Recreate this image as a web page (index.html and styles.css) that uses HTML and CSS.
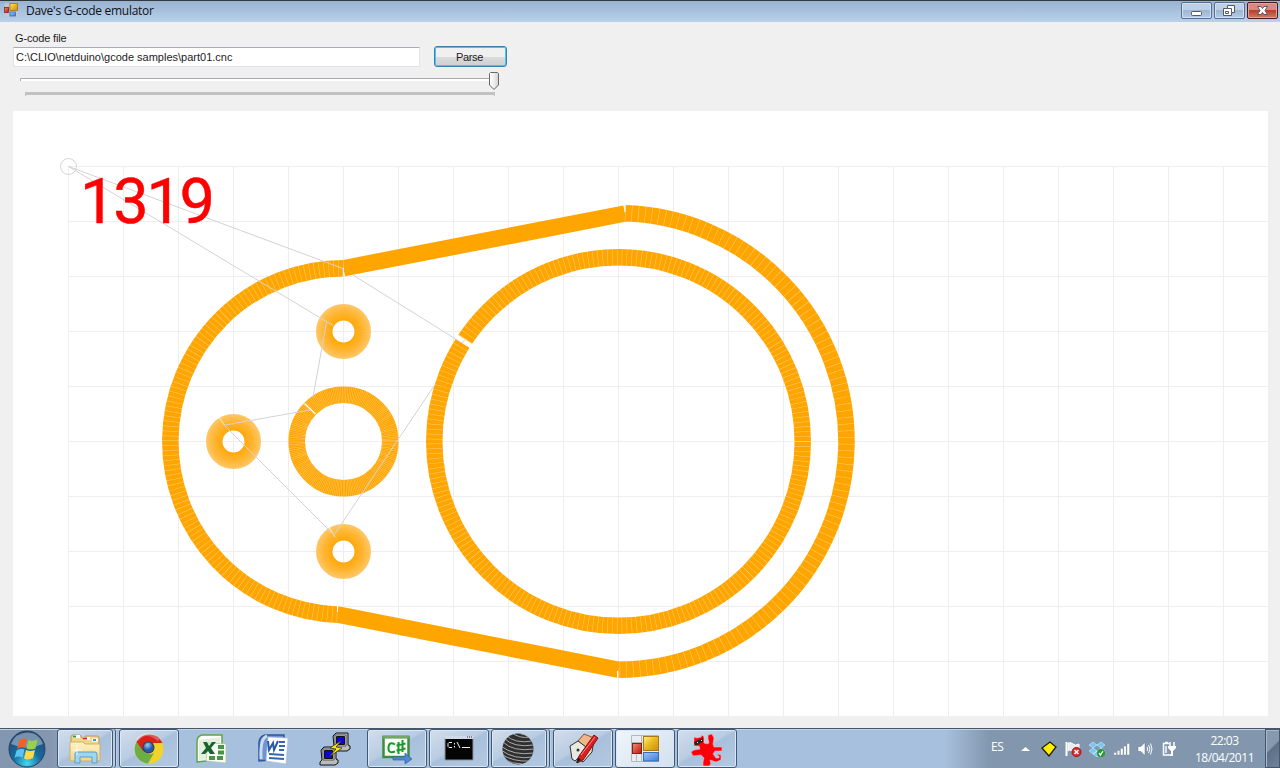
FILE: index.html
```html
<!DOCTYPE html>
<html lang="en">
<head>
<meta charset="utf-8">
<title>Dave's G-code emulator</title>
<link rel="stylesheet" href="styles.css">
</head>
<body>
<div class="desktop">
  <header class="titlebar">
    <svg class="app-icon" width="14" height="14" viewBox="0 0 28 28">
      <rect x="1" y="1" width="26" height="26" fill="#c3c8d0"/><path d="M1 8H12M11 1V27M1 20H11" stroke="#a9afba"/>
      <rect x="12" y="1" width="15" height="14" fill="url(#gy)" stroke="#9a6a10" stroke-width="1.5"/>
      <rect x="1" y="9" width="8" height="10" fill="url(#gr)" stroke="#8a1a10" stroke-width="1.5"/>
      <rect x="12" y="18" width="11" height="8" fill="url(#gb)" stroke="#3b66b8" stroke-width="1.5"/>
    </svg>
    <span class="title">Dave's G-code emulator</span>
    <div class="window-buttons">
      <span class="wb"><svg width="29" height="15"><rect x="9.500" y="8.500" width="10" height="4" rx="1" fill="#fff" stroke="#535b69"/></svg></span>
      <span class="wb"><svg width="29" height="15"><path d="M12.500 2.500h7v7h-3v3h-8v-7h4z" fill="#fff" stroke="#535b69"/><path d="M12.500 5.500h4v4M10.500 8.500h3v2h-3z" fill="none" stroke="#535b69"/></svg></span>
      <span class="wb wb-close"><svg width="29" height="15"><path d="M9.500 3.500h3.500l1.500 2L16 3.500h3.500L17 7.500l2.500 4H16l-1.500-2-1.500 2H9.500l2.500-4z" fill="#fff" stroke="#5c5560"/></svg></span>
    </div>
  </header>

  <main class="form">
    <label class="label">G-code file</label>
    <div class="row">
      <div class="input">C:\CLIO\netduino\gcode samples\part01.cnc</div>
      <div class="button">Parse</div>
    </div>
    <svg class="slider" width="490" height="30" viewBox="14 69 490 30">
      <rect x="20" y="78" width="470" height="3" fill="#fff"/><path d="M20.500 81V78.500H490" fill="none" stroke="#aaa"/>
      <rect x="25" y="92" width="470" height="3" fill="#c2c2c2"/><path d="M25.500 92V96M494.500 92V96" stroke="#c2c2c2"/>
      <path d="M490.500 72.500h7l1 1V85l-4.500 4.500L489.500 85V73.500z" fill="url(#thumb)" stroke="#686868" stroke-linejoin="round"/>
    </svg>
    <svg class="plot" width="1255" height="605" viewBox="13 111 1255 605">
      <defs>
        <pattern id="grid" x="68" y="166" width="55" height="55" patternUnits="userSpaceOnUse"><path d="M0 .5H55M.5 0V55" stroke="#eee" fill="none"/></pattern>
        <radialGradient id="hole" gradientUnits="userSpaceOnUse" cx="0" cy="0" r="27.500"><stop offset=".4" stop-color="#ffa500"/><stop offset=".7" stop-color="#ffb228"/><stop offset="1" stop-color="#ffc562"/></radialGradient>
        <g id="drill"><circle r="19.250" stroke="url(#hole)"/><circle r="19.250" stroke="#fff" stroke-opacity=".13" stroke-dasharray=".4 .8"/></g>
      </defs>
      <rect x="68" y="166" width="1200" height="550" fill="url(#grid)"/>
      <g class="cuts">
        <path d="M343.500 268.250A173.250 173.250 0 0 0 338 614.660"/>
        <path d="M343.500 268.250L625 213.500M337 614.300L618.500 669.750"/>
        <path d="M625 213.350A228.250 228.250 0 0 1 618.500 669.750"/>
        <circle cx="618.500" cy="441.500" r="184.250"/>
        <circle cx="343.500" cy="441.500" r="46.750"/>
        <use href="#drill" x="343.500" y="331.500"/>
        <use href="#drill" x="233.500" y="441.500"/>
        <use href="#drill" x="343.500" y="551.500"/>
      </g>
      <g class="seams">
        <path d="M343.500 268.250A173.250 173.250 0 0 0 338 614.660" stroke-dasharray=".5 4.340"/>
        <path d="M625 213.350A228.250 228.250 0 0 1 618.500 669.750" stroke-dasharray=".5 6.180"/>
        <circle cx="618.500" cy="441.500" r="184.250" stroke-dasharray=".5 4.340"/>
        <circle cx="343.500" cy="441.500" r="46.750" stroke-dasharray=".4 1.232"/>
      </g>
      <g class="gaps">
        <path d="M455.500 336L473.500 347.500" stroke-width="5"/>
        <path d="M304.500 403.500L315.500 414" stroke-width="1.300"/>
        <path d="M343.500 268V276M625 205V212M617.500 671V678M337.500 606V612" stroke-width="1"/>
        <path d="M219.500 418L225 426M329.500 528L335 537" stroke-width="1" stroke-opacity=".7"/>
      </g>
      <g class="travel">
        <circle cx="68.500" cy="166.500" r="8"/>
        <path d="M343 276V268.500L68.500 166.500L333 325.500M326.500 322L313 397M310 410L225 425M224 425L334 535L434 386M353 275L462 343L465 340"/>
      </g>
      <text class="count" x="80" y="223" textLength="135">1319</text>
    </svg>
  </main>

  <footer class="taskbar">
    <div class="start">
      <svg width="38" height="38" viewBox="0 0 38 38"><circle cx="19" cy="19" r="18" fill="url(#orb)" stroke="#28435f"/><path d="M3 14Q7 3 19 2.500T35 14Q19 21 3 14Z" fill="#fff" opacity=".38"/>
      <path d="M11.500 10q4-3 7.500-1l-2 9q-4-2-8 1z" fill="#f0602b"/><path d="M20.500 10q4 2 9-.5l-2 9q-5 2-9 0z" fill="#9bd04a"/><path d="M8.500 20.500q4-3 8-1l-2 8q-4-2-8 .5z" fill="#5cc3f5"/><path d="M18 20q4 2 9 0l-2 8q-5 2.500-9 .5z" fill="#ffd947"/></svg>
    </div>
    <div class="task stacked"><svg width="34" height="32" viewBox="0 0 34 32"><path d="M3 8V4q0-2 2-2h7l2 3h3V3h12q2 0 2 2v22H3z" fill="#f0d58a" stroke="#b99a50"/><path d="M5 3.500h7M15 5.500h7M24 7h6" stroke="#fff" stroke-width="3"/><path d="M5 3.500h3" stroke="#2a9a3a" stroke-width="2"/><path d="M15 5.500h4" stroke="#d42d25" stroke-width="2"/><path d="M25 7h3" stroke="#4098da" stroke-width="2"/><path d="M2 9h13l2 2h15v17H2z" fill="url(#folder)" stroke="#d0b064"/><path d="M7 30V21q0-2 2-2h18q2 0 2 2v9h-5v-6H12v6z" fill="#9ed5f1" stroke="#5d9dc4"/><path d="M9 12v10M4 17h10" stroke="#fff" opacity=".8"/></svg></div>
    <div class="task"><svg width="32" height="32" viewBox="0 0 32 32"><circle cx="16" cy="16" r="14.500" fill="#f0d42a"/><path d="M3.500 9A14.500 14.500 0 0 1 29.500 10H16L10 19z" fill="#d8231b"/><path d="M3.500 9A14.500 14.500 0 0 0 15 30.500L21 20Q15 23 10 18z" fill="#6aae45"/><path d="M4 7Q13-4 26 7" stroke="#fff" opacity=".25" fill="none" stroke-width="3"/><circle cx="15.500" cy="14.500" r="6" fill="#333c50"/><circle cx="15.500" cy="14.500" r="5" fill="url(#blue)"/></svg></div>
    <div class="pin"><svg width="32" height="32" viewBox="0 0 32 32"><path d="M7 2h20v24L2 29V9Q2 3 7 2z" fill="#fff" stroke="#58a83c" stroke-width="1.500"/><path d="M4 7L25 4v21L4 27z" fill="#e4f0dd"/><path d="M13 10l18 1v19l-20-2z" fill="#f8fbf5" stroke="#a8c79c" stroke-width=".7"/><path d="M23 12h6v4h-6zM23 17.500h6v4h-6zM14 23h6v4h-6zM22 23h6v4h-6z" fill="#489445"/><path d="M8 9h4l2 4 3-4h4l-5 6 4 6h-5l-2-3-3 3H6l5-6z" fill="#17652d"/></svg></div>
    <div class="pin"><svg width="32" height="32" viewBox="0 0 32 32"><path d="M8 2h19v24L2 28V9Q3 3 8 2z" fill="#7194ce" stroke="#2c589e" stroke-width="1.500"/><path d="M10 3Q3 5 4 26" stroke="#cbdbf4" stroke-width="3" fill="none"/><path d="M11 4l20 1-2 26-20-3z" fill="#fff" stroke="#a8bddd" stroke-width=".7"/><path d="M22 9h6M22 13h6M22 17h5M12 21l15 1M12 25l15 1" stroke="#3368b0" stroke-width="2"/><path d="M11 8l1 9 4-7 1 7 4-9" fill="none" stroke="#285ba9" stroke-width="2"/></svg></div>
    <div class="pin"><svg width="34" height="34" viewBox="0 0 34 34"><g id="pc"><path d="M15 4l3-3h12v12l2 1v3l-3 2H14v-3l2-2z" fill="#bbb" stroke="#111"/><path d="M17 3h11v11H17z" fill="#ddd" stroke="#555"/><path d="M18.500 4.500h8v8h-8z" fill="#0a00e2" stroke="#111"/></g><use href="#pc" x="-12" y="14"/><path d="M24 8L12 16l6 1-7 8L24 16l-6-1z" fill="#ffeb00" stroke="#222" stroke-width=".7"/></svg></div>
    <div class="task"><svg width="32" height="32" viewBox="0 0 32 32"><path d="M2.500 4h25v20h-25z" fill="#f9fff7" stroke="#3e8d3e" stroke-width="2.500"/><path d="M2 4h26" stroke="#74a66b" stroke-width="3"/><path d="M14 11.500Q8 8 7.500 14.500T14 18.500M17.500 9v12M21.500 7v12M15.500 12.500l9-2M15.500 17.500l9-2" fill="none" stroke="#19992c" stroke-width="2"/><path d="M12 24h12v-4l7 6-7 5v-4H12z" fill="#4f87d0" stroke="#2b61af" stroke-width=".7"/></svg></div>
    <div class="task"><svg width="32" height="30" viewBox="0 0 32 30"><path d="M2 3h28v23H2z" fill="#050505" stroke="#8b919a"/><path d="M1.500 3.500h29" stroke="#d0dbea" stroke-width="3"/><path d="M24 3h1m1 0h1m1 0h1" stroke="#333"/><path d="M9 8.500H6l-1 1v3l1 1h3M11.500 9v1.500M11.500 12v1.500M14 8l3 6M19 13.500h8" fill="none" stroke="#eee"/></svg></div>
    <div class="task stacked"><svg class="ball" width="34" height="34" viewBox="0 0 34 34"><circle cx="17" cy="17" r="15.500" fill="#303030"/><g clip-path="url(#ball)" fill="none" stroke="#aaa"><path d="M5 3q8 9 27 6M3 6q9 10 30 7M2 10q10 10 31 7M0 14q12 10 33 7M0 18q13 10 32 7M0 22q12 8 29 7M2 27q9 5 19 5M10 0q8 7 19 5M15-1q6 5 13 4"/></g></svg></div>
    <div class="task"><svg width="32" height="32" viewBox="0 0 32 32"><path d="M11 8l6-6 10 4-2 13-9 10-5-3z" fill="#f3dcc1" stroke="#303030"/><path d="M11 8l6-7 10 4-7 10z" fill="#f2b587" stroke="#885b3d"/><path d="M3 13l8-5 8 6-2 6-9 8-3-2z" fill="#e9e9e2" stroke="#333"/><circle cx="11" cy="17" r="1.500" fill="#333"/><path d="M10 30l2-7L27 2l4 3-15 22z" fill="#e11d23" stroke="#761414"/><path d="M9 30l2-6 3 3z" fill="#222"/><path d="M14 22L28 4" stroke="#ff8c80"/></svg></div>
    <div class="task active"><svg width="28" height="28" viewBox="0 0 28 28"><path d="M.5.5h27v26H.5zM.5 7.500h27M10.500.5v26M5.500 19.500v7" fill="#e8edf2" stroke="#b4b8bd"/><rect x="12.500" y="1.500" width="15" height="14" fill="url(#gy)" stroke="#a97911"/><rect x="1.500" y="8.500" width="9" height="10" fill="url(#gr)" stroke="#842018"/><rect x="12.500" y="17.500" width="15" height="8.500" fill="url(#gb)" stroke="#386bb0"/></svg></div>
    <div class="task"><svg width="34" height="34" viewBox="0 0 34 34"><path d="M4 5l3 1 4-1 1-2 2 2v6l4 1 1-2-1-3V3l4-1 2 4-1 6 1 3h8v4h-7l-2 3 3 4h3v-2l-2-1 1-1 3 1v5l-5 2-6-2 1 4-2 2h-6v-4l1-4-3-3-8 1-2-4 3-2 6-1-1-3H4z" fill="#ff0008" stroke="#f5b4bd" stroke-width=".6"/><path d="M4 10l9-4v4l-3 1-2 2H5z" fill="#252525"/><path d="M7 10.500h1m3-2h1" stroke="#fff"/></svg></div>
    <div class="tray">
      <span class="lang">ES</span>
      <svg class="arrow" width="9" height="6"><path d="M0 5L4.500 1 9 5z" fill="#fff"/></svg>
      <svg class="tray-icon" width="16" height="16"><path d="M1 7L9 1l6 5-7 9z" fill="#fff000" stroke="#202000" stroke-width="1.300"/></svg>
      <svg class="tray-icon" width="17" height="16"><path d="M1.500 1v14" stroke="#fff" stroke-width="2"/><path d="M3 2q3-1 5 1t6 0v7q-4 2-7 0t-4 0z" fill="#e9edf2" stroke="#fff"/><circle cx="11.500" cy="11" r="4.500" fill="#da2c2c" stroke="#a11"/><path d="M9.500 9l4 4m0-4l-4 4" stroke="#fff" stroke-width="1.500"/></svg>
      <svg class="tray-icon" width="17" height="16"><path d="M4 1l4 3-4 3-4-3zM12 1l4 3-4 3-4-3zM4 7l4 3-4 3-4-3zM12 7l4 3-4 3-4-3zM8 10l4 3-4 3-4-3z" fill="#75c7f4" stroke="#e4f6ff" stroke-width=".5"/><circle cx="12" cy="12" r="4" fill="#279832"/><path d="M10 12l1.500 2L14 10" stroke="#fff" stroke-width="1.300" fill="none"/></svg>
      <svg class="tray-icon" width="16" height="16"><path d="M0 11.500h2.500V14H0zM3.300 9.500h2.400V14H3.300zM6.500 7.500H9V14H6.500zM9.800 5h2.400v9H9.800zM13 2.500h2.500V14H13z" fill="#fff" stroke="#606f80" stroke-width=".3"/></svg>
      <svg class="tray-icon" width="16" height="16"><path d="M1 5.500h3L7 2h1v12H7l-3-3.500H1z" fill="#fff" stroke="#61707f" stroke-width=".5"/><path d="M10 6q1.500 2 0 4M11.500 4q3 4 0 8M13.500 2.500q3 5.500 0 11" fill="none" stroke="#fff"/></svg>
      <svg class="tray-icon" width="16" height="16"><path d="M8 2.500H2.500V14H10M4 1.500h3" fill="none" stroke="#fff" stroke-width="1.500"/><path d="M9 1v4m4-4v4" stroke="#fff" stroke-width="1.500"/><path d="M7 5h8v2l-3 3h-2L7 7zM10 10h2v5H9v-1h1z" fill="#fff"/><path d="M4 5h2v7H4z" fill="#dbe4ec"/></svg>
      <div class="clock"><span>22:03</span><span class="date">18/04/2011</span></div>
      <div class="show-desktop"></div>
    </div>
  </footer>
</div>
<svg class="defs" width="0" height="0"><defs>
  <linearGradient id="gy" x2="1" y2="1"><stop stop-color="#fff08a"/><stop offset=".5" stop-color="#e8b71e"/><stop offset="1" stop-color="#c88f10"/></linearGradient>
  <linearGradient id="gr" x2="1" y2="1"><stop stop-color="#f18c74"/><stop offset="1" stop-color="#b9160d"/></linearGradient>
  <linearGradient id="gb" x2="1" y2="1"><stop stop-color="#9fc6fb"/><stop offset="1" stop-color="#3b7bdc"/></linearGradient>
  <linearGradient id="thumb" x2="1"><stop stop-color="#fff"/><stop offset=".5" stop-color="#eee"/><stop offset="1" stop-color="#d0d0d0"/></linearGradient>
  <radialGradient id="orb" cx=".5" cy=".9" r=".85"><stop stop-color="#43dbef"/><stop offset=".45" stop-color="#176a9f"/><stop offset="1" stop-color="#234a75"/></radialGradient>
  <linearGradient id="folder" x2="0" y2="1"><stop stop-color="#fff3c4"/><stop offset="1" stop-color="#efd48a"/></linearGradient>
  <radialGradient id="blue" cx=".4" cy=".25"><stop stop-color="#a3cbf5"/><stop offset="1" stop-color="#225ba9"/></radialGradient>
  <clipPath id="ball"><circle cx="17" cy="17" r="15.500"/></clipPath>
</defs></svg>
</body>
</html>
```
FILE: styles.css
```css
* { box-sizing: border-box; }
body { margin: 0; overflow: hidden; background: #f0f0f0; font-family: "Liberation Sans", Arial, sans-serif; }
svg { display: block; flex: none; }
.desktop { width: 1280px; height: 768px; display: flex; flex-direction: column; }
.defs { position: absolute; }

.titlebar { height: 22px; flex: none; display: flex; align-items: flex-start; padding-left: 4px; border-top: 1px solid #33383f; background: linear-gradient(#98b3d1, #b9d1ea); }
.app-icon { margin-top: 2px; }
.title { margin-left: 8px; font: 12px/20px "Open Sans", "Noto Sans", sans-serif; letter-spacing: -.27px; color: #101018; white-space: nowrap; }
.window-buttons { display: flex; gap: 2px; margin: 1px 2px 0 auto; }
.wb { width: 31px; height: 17px; border: 1px solid #56708d; border-radius: 2px; box-shadow: inset 0 0 0 1px #d2e1f0; background: linear-gradient(#bdd0e5 50%, #9db6d1 50%, #b4cce6); }
.wb-close { border-color: #4b1720; box-shadow: inset 0 0 0 1px #dfa49c; background: linear-gradient(#d88a7d 45%, #b93e2d 50%, #cf7a60); }

.form { height: 706px; flex: none; display: flex; flex-direction: column; padding: 9px 12px 0 13px; }
.label { height: 16px; padding-left: 2px; font-size: 11px; line-height: 15px; letter-spacing: -.15px; color: #1c1c1c; }
.row { display: flex; align-items: flex-start; height: 22px; gap: 14px; margin-top: -1px; }
.input { width: 407px; height: 20px; margin-top: 1px; padding-left: 2px; border: 1px solid #e2e3ea; border-top-color: #abadb3; background: #fff; font-size: 11px; line-height: 19px; white-space: nowrap; color: #1c1c1c; }
.button { width: 73px; height: 21px; border: 1px solid #3c7fb1; border-radius: 3px; box-shadow: inset 0 0 0 1px #48c4ee; background: linear-gradient(#f0f0f0 50%, #dcdcdc 50%, #cfcfcf); text-align: center; font-size: 11px; line-height: 20px; letter-spacing: -.3px; padding-right: 2px; color: #1c1c1c; }
.slider { margin: 1px 0 12px 1px; }

.plot { background: #fff; }
.cuts { fill: none; stroke: #ffa500; stroke-width: 16.5px; }
.seams { fill: none; stroke: #fff; stroke-opacity: .48; stroke-width: 16.5px; }
.gaps { fill: none; stroke: #fff; }
.travel { fill: none; stroke: #d3d3d3; }
.count { fill: #f00; stroke: #f00; stroke-width: .5px; font: 63px Roboto, sans-serif; }

.taskbar { height: 40px; flex: none; display: flex; align-items: stretch; border-top: 1px solid #47566a; box-shadow: inset 0 1px 0 #c3d4e6; background: linear-gradient(90deg, #8396b0 0, #8597b0 50px, #a7c0dd 120px, #a7c0dd 945px, #8296ae 990px, #8296ae); }
.start { width: 57px; padding: 1px 0 0 8px; }
.task, .pin { width: 60px; margin-right: 2px; display: flex; align-items: center; justify-content: center; flex: none; }
.task { border: 1px solid #3f5873; border-radius: 3px; box-shadow: inset 0 0 0 1px #dbe7f3; background: linear-gradient(150deg, #d2deec, #b9cce2 45%, #a9c0dc 50%, #b3c9e2); }
.stacked { width: 56px; margin-right: 6px; box-shadow: inset 0 0 0 1px #dbe7f3, 2px 0 0 #bccde1, 3px 0 0 #3f5873, 4px 0 0 #bccde1; }
.ball { margin-right: 3px; }
.active { background: linear-gradient(135deg, #f0f5fa, #d2e0ef); }

.tray { margin-left: auto; display: flex; align-items: center; color: #fff; font: 12px/17px "Open Sans", "Noto Sans", sans-serif; }
.lang { width: 16px; margin-right: 14px; padding-bottom: 4px; letter-spacing: -.3px; }
.arrow { margin-right: 11px; }
.tray-icon { margin-right: 7.5px; }
.clock { width: 81px; display: flex; flex-direction: column; align-items: center; letter-spacing: -.5px; white-space: nowrap; }
.date { letter-spacing: -.45px; }
.show-desktop { width: 15px; height: 39px; border: 1px solid #43566d; box-shadow: inset 1px 1px 0 #a8b8ca; background: linear-gradient(135deg, #8799ae 45%, #5d7087 50%, #71839a); }
```
